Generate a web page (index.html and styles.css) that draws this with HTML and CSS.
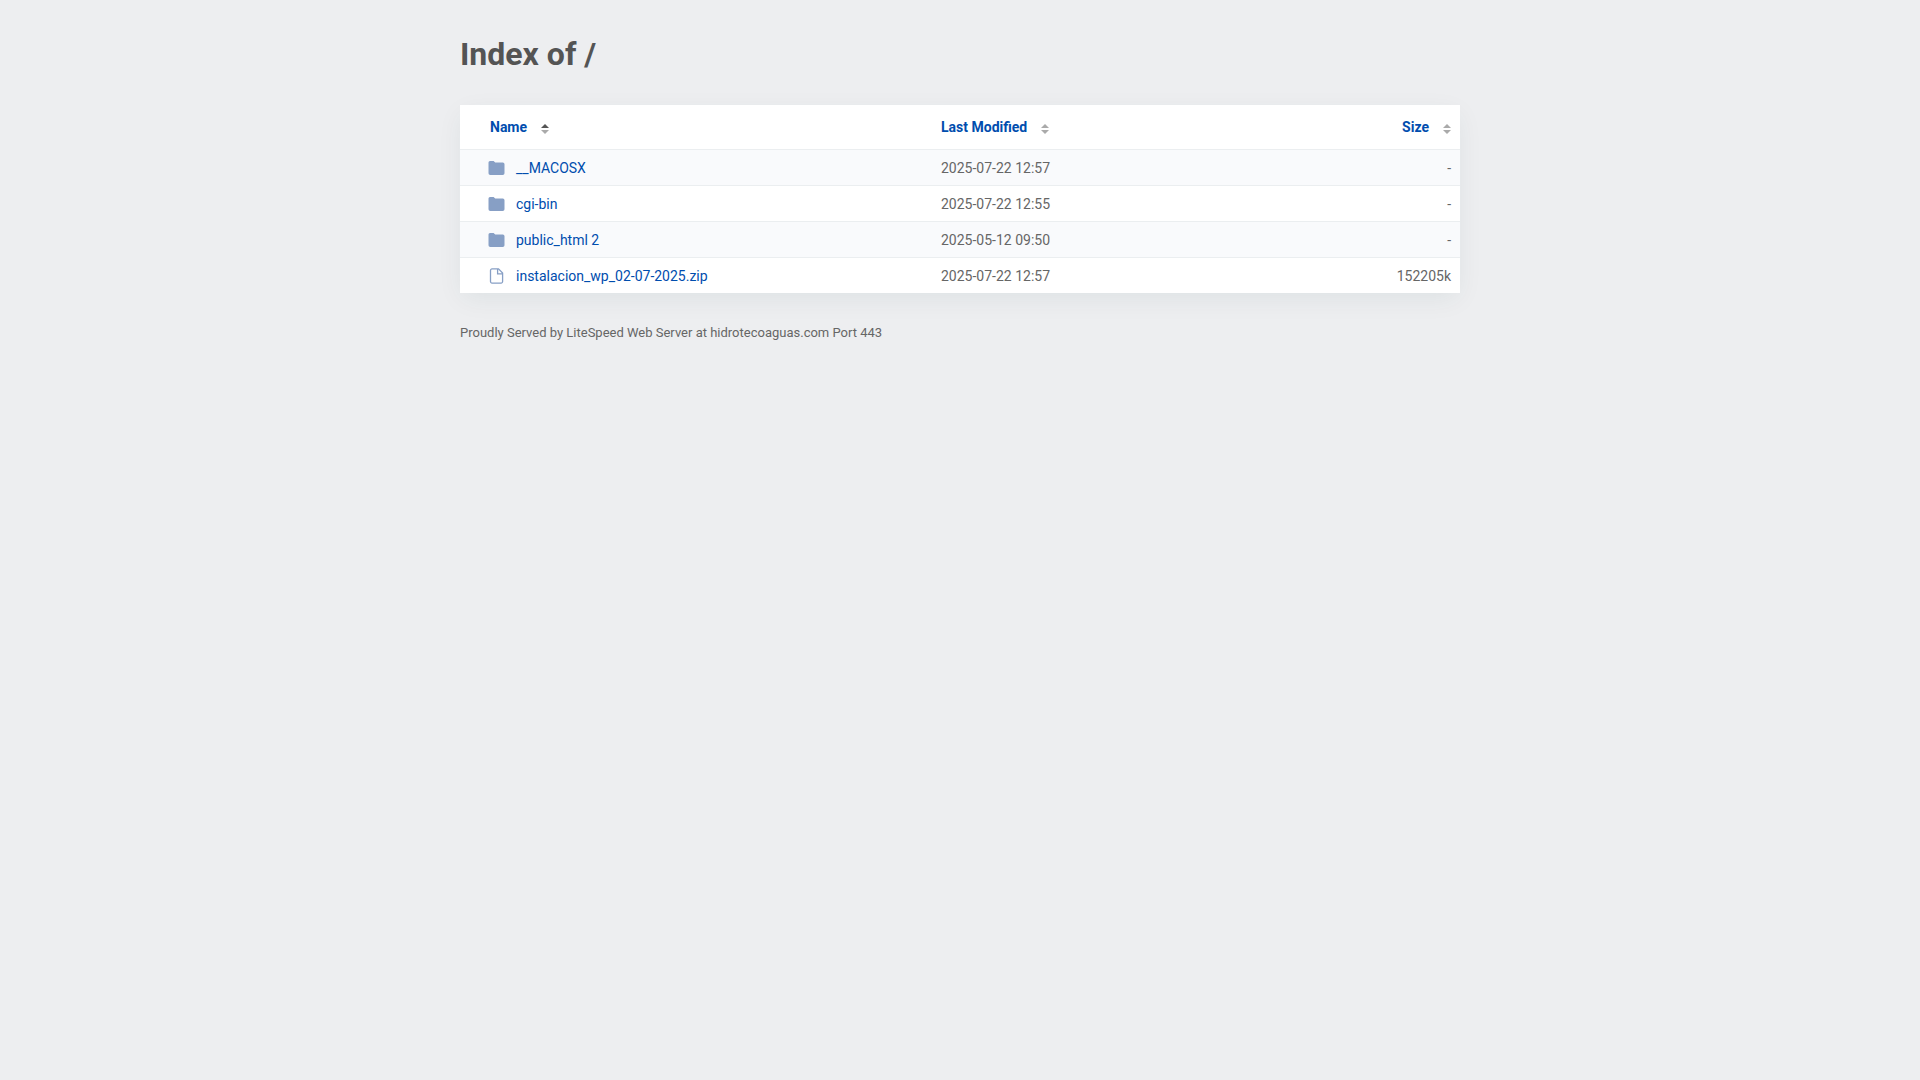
FILE: index.html
```
<!DOCTYPE html>
<html lang="en">
<head>
  <meta charset="UTF-8">
  <meta name="viewport" content="width=device-width, initial-scale=1.0">
  <title>Index of /</title>
  <link rel="stylesheet" href="styles.css">
</head>
<body>
  <svg class="symbols" aria-hidden="true">
    <symbol id="icon-folder" viewBox="0 0 17 16">
      <path d="M2 1h3.600l1.600 1.500h7.600a1.700 1.700 0 0 1 1.700 1.700v9a1.800 1.800 0 0 1-1.800 1.800H2.300A1.800 1.800 0 0 1 0.500 13.200V2.500A1.500 1.500 0 0 1 2 1z"/>
    </symbol>
    <symbol id="icon-file" viewBox="0 0 17 16">
      <path d="M4 0.900h6.500L14.600 5v8.600a1.500 1.500 0 0 1-1.500 1.500H4a1.500 1.500 0 0 1-1.500-1.500V2.400A1.500 1.500 0 0 1 4 0.900zM9.600 1v4.900h4.900"/>
    </symbol>
    <symbol id="icon-sort" viewBox="0 0 8 10">
      <path class="up" d="M0 4L4 0l4 4z"/>
      <path class="down" d="M0 6h8L4 10z"/>
    </symbol>
  </svg>

  <div class="container">
    <h1>Index of /</h1>

    <table>
      <thead>
        <tr>
          <th class="name" aria-sort="ascending"><a href="#">Name<svg class="sort sort-asc"><use href="#icon-sort"/></svg></a></th>
          <th class="modified"><a href="#">Last Modified<svg class="sort"><use href="#icon-sort"/></svg></a></th>
          <th class="size"><a href="#">Size<svg class="sort"><use href="#icon-sort"/></svg></a></th>
        </tr>
      </thead>
      <tbody>
        <tr>
          <td class="name"><a href="#"><svg class="icon folder"><use href="#icon-folder"/></svg>__MACOSX</a></td>
          <td class="modified">2025-07-22 12:57</td>
          <td class="size">-</td>
        </tr>
        <tr>
          <td class="name"><a href="#"><svg class="icon folder"><use href="#icon-folder"/></svg>cgi-bin</a></td>
          <td class="modified">2025-07-22 12:55</td>
          <td class="size">-</td>
        </tr>
        <tr>
          <td class="name"><a href="#"><svg class="icon folder"><use href="#icon-folder"/></svg>public_html 2</a></td>
          <td class="modified">2025-05-12 09:50</td>
          <td class="size">-</td>
        </tr>
        <tr>
          <td class="name"><a href="#"><svg class="icon file"><use href="#icon-file"/></svg>instalacion_wp_02-07-2025.zip</a></td>
          <td class="modified">2025-07-22 12:57</td>
          <td class="size">152205k</td>
        </tr>
      </tbody>
    </table>

    <footer>Proudly Served by LiteSpeed Web Server at hidrotecoaguas.com Port 443</footer>
  </div>
</body>
</html>
```
FILE: styles.css
```
body {
  margin: 0;
  background: #edeef0;
  font-family: Roboto, "Liberation Sans", sans-serif;
  font-size: 14px;
  line-height: 20px;
  color: #666;
}
.symbols {
  display: none;
}
.container {
  max-width: 1000px;
  margin: 0 auto;
  padding: 32px 20px;
}
h1 {
  margin: 0 0 29px;
  font-size: 32px;
  line-height: 44px;
  color: #545454;
}
a {
  color: #004dae;
  text-decoration: none;
}
a:hover {
  text-decoration: underline;
}
table {
  width: 100%;
  table-layout: fixed;
  border-collapse: separate;
  border-spacing: 0;
  background: #fff;
  box-shadow: 0 7px 25px -2px rgba(0, 70, 70, 0.07);
}
th,
td {
  box-sizing: border-box;
  padding: 8px 9px 7px;
  text-align: left;
}
th {
  padding: 12px 9px;
}
td {
  border-top: 1px solid #ebeef0;
}
tbody tr:nth-child(odd) {
  background: #f9fafc;
}
th.name {
  width: 47.2%;
  padding-left: 30px;
}
td.name {
  padding-left: 28px;
}
th.size,
td.size {
  text-align: right;
}
td a {
  display: inline-flex;
  align-items: center;
  vertical-align: top;
}
.icon {
  width: 17px;
  height: 16px;
  margin-right: 11px;
}
.folder {
  fill: #879fc5;
}
.file {
  fill: none;
  stroke: #879fc5;
  stroke-width: 1.3;
}
.sort {
  width: 8px;
  height: 10px;
  margin-left: 14px;
  vertical-align: -2px;
  color: #aaa;
  fill: #aaa;
}
.sort-asc {
  color: #555;
}
.up {
  fill: currentColor;
}
footer {
  padding-top: 30px;
  font-size: 13px;
}
```
